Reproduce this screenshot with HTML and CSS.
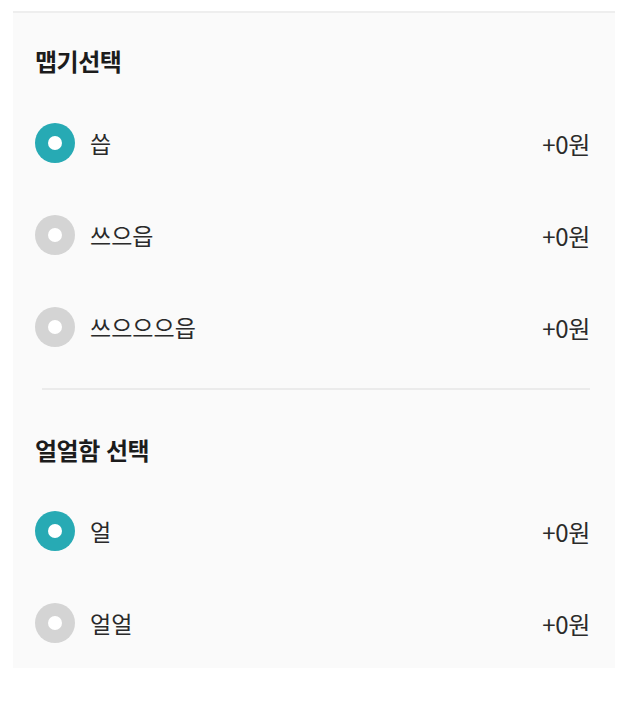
FILE: index.html
```html
<!DOCTYPE html>
<html lang="ko">
<head>
  <meta charset="UTF-8">
  <meta name="viewport" content="width=device-width, initial-scale=1.0">
  <title>옵션 선택</title>
  <link rel="stylesheet" href="styles.css">
</head>
<body>
  <div class="card">
    <section class="group">
      <h2>맵기선택</h2>
      <label class="option">
        <span class="radio checked"></span>
        <span class="name">씁</span>
        <span class="price">+0원</span>
      </label>
      <label class="option">
        <span class="radio"></span>
        <span class="name">쓰으읍</span>
        <span class="price">+0원</span>
      </label>
      <label class="option">
        <span class="radio"></span>
        <span class="name">쓰으으으읍</span>
        <span class="price">+0원</span>
      </label>
    </section>

    <hr class="divider">

    <section class="group second">
      <h2>얼얼함 선택</h2>
      <label class="option">
        <span class="radio checked"></span>
        <span class="name">얼</span>
        <span class="price">+0원</span>
      </label>
      <label class="option">
        <span class="radio"></span>
        <span class="name">얼얼</span>
        <span class="price">+0원</span>
      </label>
    </section>
  </div>
</body>
</html>
```

FILE: styles.css
```css
body {
  margin: 0;
  background: #ffffff;
  font-family: "Noto Sans CJK KR", "Noto Sans", sans-serif;
  color: #2a2a2a;
}
.card {
  margin: 11px 12px 0 13px;
  border-top: 2px solid #eeeeee;
  background: #fafafa;
  padding: 30px 25px 0 22px;
  height: 625px;
}
h2 {
  margin: 0 0 18px;
  font-size: 24px;
  line-height: 36px;
  font-weight: 700;
  color: #1c1c1c;
  letter-spacing: -0.5px;
}
.option {
  display: flex;
  align-items: center;
  height: 92px;
}
.radio {
  width: 40px;
  height: 40px;
  border-radius: 50%;
  background: #d4d4d4;
  display: flex;
  align-items: center;
  justify-content: center;
  flex-shrink: 0;
}
.radio::after {
  content: "";
  width: 14px;
  height: 14px;
  border-radius: 50%;
  background: #fff;
}
.radio.checked {
  background: #27aab4;
}
.name {
  margin-left: 15px;
  font-size: 23px;
  flex: 1;
}
.price {
  font-size: 24px;
  letter-spacing: -0.3px;
}
.divider {
  border: 0;
  border-top: 2px solid #ebebeb;
  margin: 15px 0 0 7px;
}
.second h2 {
  margin-top: 42px;
  margin-bottom: 17px;
}
```
